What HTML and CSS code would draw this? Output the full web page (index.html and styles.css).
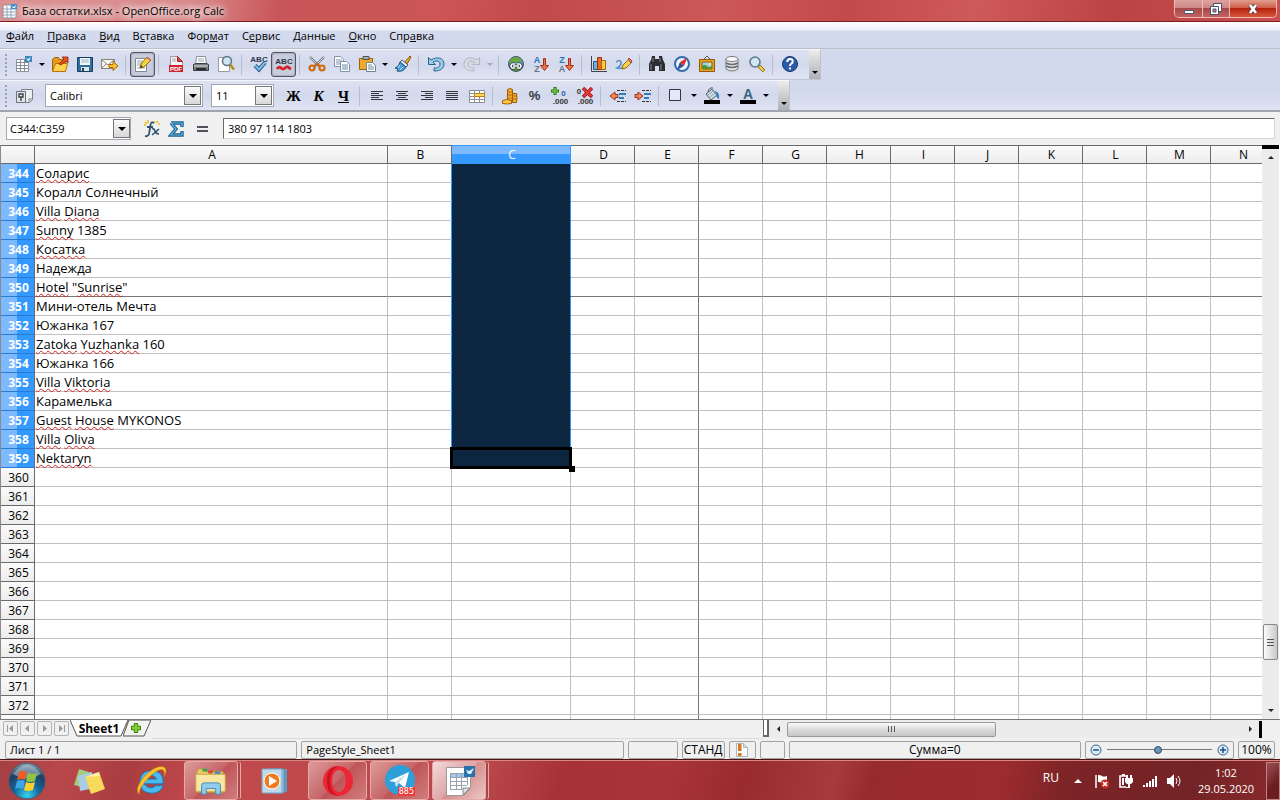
FILE: index.html
```html
<!DOCTYPE html>
<html lang="ru">
<head>
<meta charset="utf-8">
<title>База остатки.xlsx - OpenOffice.org Calc</title>
<link rel="stylesheet" href="styles.css">
</head>
<body>
<header class="titlebar">
  <svg class="app-icon" viewBox="0 0 16 16"><path d="M1 2h10l3 4v9H1z" fill="#fff" stroke="#8c8f96"/><path d="M1 6h12M1 9h12M1 12h12M5 3v12M9 3v12" stroke="#8fa6bd"/><path d="M9 1h6v5H9z" fill="#3f8fc8"/><path d="M10 3l2 1 2-2-1 3h-2z" fill="#fff"/></svg>
  <h1 class="title">База остатки.xlsx - OpenOffice.org Calc</h1>
  <div class="window-buttons">
    <button class="wb wb-min" aria-label="Свернуть"><svg viewBox="0 0 12 12"><path d="M1.500 7.500h9v3h-9z" fill="#fff" stroke="#555a70"/></svg></button>
    <button class="wb wb-max" aria-label="Развернуть"><svg viewBox="0 0 12 12"><path d="M3.500.500h8v8h-8z" fill="#fff" stroke="#4d526a"/><path d="M.500 3.500h8v8h-8z" fill="#fff" stroke="#4d526a"/><path d="M3 6h3v3H3z" fill="#b98a90" stroke="#4d526a"/></svg></button>
    <button class="wb wb-close" aria-label="Закрыть"><svg viewBox="0 0 12 12"><path d="M3 2l6 8M9 2l-6 8" stroke="#5c3a44" stroke-width="4.400"/><path d="M3 2l6 8M9 2l-6 8" stroke="#fff" stroke-width="2.600"/></svg></button>
  </div>
</header>

<nav class="menubar">
  <a href="#"><u>Ф</u>айл</a><a href="#"><u>П</u>равка</a><a href="#"><u>В</u>ид</a><a href="#">В<u>с</u>тавка</a><a href="#">Фор<u>м</u>ат</a><a href="#">С<u>е</u>рвис</a><a href="#"><u>Д</u>анные</a><a href="#"><u>О</u>кно</a><a href="#">Спр<u>а</u>вка</a>
</nav>

<div class="toolbars">
  <div class="toolbar toolbar-standard">
    <span class="grip"></span>
    <button class="tb" aria-label="Создать"><svg viewBox="0 0 18 18"><path d="M1.500 4.500h12v12h-12z" fill="#fff" stroke="#8d939d"/><path d="M1 7.500h12M1 10.500h12M1 13.500h12M5.500 4v12M9.500 4v12" stroke="#858c96"/><path d="M10 1h7v6h-7z" fill="#3a88bd"/><path d="M11 3l2 1 3-2-2 4h-1z" fill="#d9effb"/></svg></button>
    <button class="dd" aria-label="Список создания"></button>
    <button class="tb" aria-label="Открыть"><svg viewBox="0 0 18 18"><path d="M1.500 15.500v-11l2-2h4l1 2h6v11z" fill="#e79a1b" stroke="#a96008"/><path d="M1.500 16.500l3-8h12l-2 8z" fill="#ffd34d" stroke="#b8730b"/><path d="M8 9l5-5-2-2h6v6l-2-2-5 4z" fill="#e8501c" stroke="#8f2308" stroke-width=".8"/></svg></button>
    <button class="tb" aria-label="Сохранить"><svg viewBox="0 0 18 18"><path d="M1.500 2.500h15v14h-15z" fill="#2f6f9c" stroke="#17405f"/><path d="M4 3h10v7H4z" fill="#f4f7fa"/><path d="M5 5h8M5 7h8" stroke="#9db2c2"/><path d="M5 12h8v4H5z" fill="#dde5ea"/><path d="M6 13h2v3H6z" fill="#17405f"/></svg></button>
    <button class="tb" aria-label="Отправить"><svg viewBox="0 0 18 18"><path d="M.500 4.500h13v9h-13z" fill="#f8f6ee" stroke="#88847c"/><path d="M1 5l6 5 6-5M1 13l4-4M13 13L9 9" fill="none" stroke="#88847c"/><path d="M8 9.500h4v-3l5 4.500-5 4.500v-3H8z" fill="#ffc233" stroke="#a86a06"/></svg></button>
    <span class="sep"></span>
    <button class="tb pressed" aria-label="Режим правки"><svg viewBox="0 0 18 18"><path d="M1.500 3.500h11v13h-11z" fill="#fff" stroke="#7f8790"/><path d="M3 6h6M3 8h5M3 10h4M3 13h8" stroke="#9aa3ad"/><path d="M6 13l1-4 6-7 4 3-7 7z" fill="#f5d23e" stroke="#8a7413"/><path d="M13 2l4 3-1 1-4-3z" fill="#e9657e"/><path d="M6 13l1-3 2 2z" fill="#333"/></svg></button>
    <span class="sep"></span>
    <button class="tb" aria-label="Экспорт в PDF"><svg viewBox="0 0 18 18"><path d="M3.500 1.500h7l5 5v10h-12z" fill="#f6f6f8" stroke="#999"/><path d="M10.500 1.500l5 5h-5z" fill="#d84653" stroke="#a22"/><path d="M5 4h4M5 6h4" stroke="#aaa"/><path d="M2 10h14v7H2z" fill="#cf2330"/><text x="9" y="16" class="pdf-text">PDF</text></svg></button>
    <button class="tb" aria-label="Печать"><svg viewBox="0 0 18 18"><path d="M4.500 1.500h9l1 8h-11z" fill="#fff" stroke="#8a929b"/><path d="M6 4h6M6 6h6" stroke="#9aa"/><path d="M1.500 9.500l2-1h11l2 1v6h-15z" fill="#7a7c80" stroke="#3b3d41"/><path d="M2 11h14" stroke="#dadde0"/><path d="M4 14h10" stroke="#26282b" stroke-width="2"/></svg></button>
    <button class="tb" aria-label="Просмотр страницы"><svg viewBox="0 0 18 18"><path d="M1.500 2.500h11v14h-11z" fill="#fff" stroke="#979ca5"/><circle cx="10" cy="6" r="4.500" fill="#c9e4f4" fill-opacity=".9" stroke="#5e7387" stroke-width="1.500"/><path d="M13 9.500l4 5" stroke="#b68918" stroke-width="2.500"/></svg></button>
    <span class="sep"></span>
    <button class="tb" aria-label="Проверка орфографии"><svg viewBox="0 0 18 18"><text x="9" y="6.500" class="abc-text">ABC</text><path d="M5 10.500l4 4 6-7" fill="none" stroke="#22537e" stroke-width="4"/><path d="M5 10.500l4 4 6-7" fill="none" stroke="#7cc0ee" stroke-width="2.200"/></svg></button>
    <button class="tb pressed" aria-label="Автопроверка"><svg viewBox="0 0 18 18"><text x="9" y="9" class="abc-text">ABC</text><path d="M2 14q2-3 4-1t4 0 3-1 3 2" fill="none" stroke="#d4202a" stroke-width="2.800"/></svg></button>
    <span class="sep"></span>
    <button class="tb" aria-label="Вырезать"><svg viewBox="0 0 18 18"><path d="M2 2l10 10M16 2L6 12" stroke="#70757b" stroke-width="2.400"/><path d="M2 2l9 9M16 2l-9 9" stroke="#d6dadd"/><circle cx="4" cy="13" r="2.500" fill="none" stroke="#d06a10" stroke-width="2.200"/><circle cx="14" cy="13" r="2.500" fill="none" stroke="#d06a10" stroke-width="2.200"/><path d="M6 11l3-2 3 2" fill="none" stroke="#d06a10" stroke-width="2"/></svg></button>
    <button class="tb" aria-label="Копировать"><svg viewBox="0 0 18 18"><path d="M1.500 1.500h6l3 3v7h-9z" fill="#fff" stroke="#7f95a8"/><path d="M3 5h6M3 7h6M3 9h5" stroke="#7d97ad"/><path d="M7.500 6.500h6l3 3v7h-9z" fill="#fff" stroke="#7f95a8"/><path d="M9 10h6M9 12h6M9 14h6" stroke="#6f8ca6"/></svg></button>
    <button class="tb" aria-label="Вставить"><svg viewBox="0 0 18 18"><path d="M1.500 3.500h13v11h-13z" fill="#f0a92a" stroke="#9b620c"/><path d="M5 1.500h6v3H5z" fill="#a9adb3" stroke="#555"/><path d="M8.500 7.500h6l3 3v6h-9z" fill="#fff" stroke="#6f8291"/><path d="M10 10h4M10 12h6M10 14h6" stroke="#6f8ca6"/></svg></button>
    <button class="dd" aria-label="Варианты вставки"></button>
    <button class="tb" aria-label="Копировать формат"><svg viewBox="0 0 18 18"><path d="M11 7l5-6 1 1-4 7z" fill="#f1b32c" stroke="#8b5a08"/><path d="M8 5l6 5-2 2-6-5z" fill="#e8eef4" stroke="#557"/><path d="M6 7l6 5c-2 4-6 5-9 4l1-2-3-1c3-1 4-3 5-6z" fill="#4d9bd6" stroke="#1d5583"/><path d="M6 10l-2 3M9 12l-3 3" stroke="#c3e3fa"/></svg></button>
    <span class="sep"></span>
    <button class="tb" aria-label="Отменить"><svg viewBox="0 0 18 18"><path d="M1.500 2.500v7h7L6 7c4-2 7-1 7 2s-2 4-6 4v3c7 0 10-3 10-7 0-6-7-8-13-4z" fill="#9bcbea" stroke="#2b628c"/></svg></button>
    <button class="dd" aria-label="Список отмены"></button>
    <button class="tb" aria-label="Вернуть"><svg viewBox="0 0 18 18"><path d="M16.500 2.500v7h-7L12 7C8 5 5 6 5 9s2 4 6 4v3c-7 0-10-3-10-7 0-6 7-8 13-4z" fill="#d8dce4" stroke="#b2b7c0"/></svg></button>
    <button class="dd dd-off" aria-label="Список возврата"></button>
    <span class="sep"></span>
    <button class="tb" aria-label="Гиперссылка"><svg viewBox="0 0 18 18"><circle cx="9" cy="9" r="7.500" fill="#5e96c8" stroke="#42566c"/><path d="M3 5q6-6 12 0l-2 3-4-2-3 3-4-1z" fill="#69aa38"/><path d="M4 14q5 4 10 0l-3-2H7z" fill="#4f8f2b"/><path d="M8 9H5q-2 2 0 4h3M10 9h3q2 2 0 4h-3M6 11h6" fill="none" stroke="#333" stroke-width="3"/><path d="M8 9H5q-2 2 0 4h3M10 9h3q2 2 0 4h-3M6 11h6" fill="none" stroke="#fff" stroke-width="1.500"/></svg></button>
    <button class="tb" aria-label="По возрастанию"><svg viewBox="0 0 18 18"><text x="5" y="8" class="sort-text sort-blue">A</text><text x="5" y="17" class="sort-text sort-gray">Z</text><path d="M11.500 3.500h2v7h3L12.500 15.500 8.500 10.500h3z" fill="#ef7440" stroke="#a52c14"/></svg></button>
    <button class="tb" aria-label="По убыванию"><svg viewBox="0 0 18 18"><text x="5" y="8" class="sort-text sort-blue">Z</text><text x="5" y="17" class="sort-text sort-gray">A</text><path d="M11.500 3.500h2v7h3L12.500 15.500 8.500 10.500h3z" fill="#ef7440" stroke="#a52c14"/></svg></button>
    <span class="sep"></span>
    <button class="tb" aria-label="Диаграмма"><svg viewBox="0 0 18 18"><path d="M1.500 1v15.500H17" fill="none" stroke="#444"/><path d="M3.500 6.500h4v8h-4z" fill="#6eb0df" stroke="#28577c"/><path d="M7.500 2.500h4v12h-4z" fill="#ee6a24" stroke="#963006"/><path d="M11.500 5.500h4v9h-4z" fill="#ffcb3b" stroke="#a36b05"/></svg></button>
    <button class="tb" aria-label="Рисунок"><svg viewBox="0 0 18 18"><path d="M1 7q4-3 5 0t-4 6q5 1 8-1" fill="none" stroke="#4d92ce" stroke-width="1.600"/><path d="M7 14l1-4 6-6 3 3-6 6z" fill="#f8cf50" stroke="#9b6b12"/><path d="M13 4l1-1 3 3-1 2z" fill="#e67d82" stroke="#a34747"/></svg></button>
    <span class="sep"></span>
    <button class="tb" aria-label="Найти"><svg viewBox="0 0 18 18"><path d="M4 1h3v3h4V1h3l1 4 2 4v7h-6v-5H7v5H1V9l2-4z" fill="#2c2e31"/><path d="M3 9v6M13 9v6M5 3v4M12 3v4" stroke="#85898e"/></svg></button>
    <button class="tb" aria-label="Навигатор"><svg viewBox="0 0 18 18"><circle cx="9" cy="9" r="7" fill="#edf5fc" stroke="#356caa" stroke-width="2"/><path d="M14 3l-3 8-4-4z" fill="#e22b24"/><path d="M4 15l3-8 4 4z" fill="#304f96"/></svg></button>
    <button class="tb" aria-label="Галерея"><svg viewBox="0 0 18 18"><path d="M6 4l3-3 3 3" fill="none" stroke="#555"/><path d="M1.500 4.500h15v12h-15z" fill="#f0a51e" stroke="#915806"/><path d="M4 7h10v7H4z" fill="#9bd4ef" stroke="#8a5a10"/><path d="M4 14v-3q3-2 5 0t5 0v3z" fill="#51952e"/><path d="M11 8h2v2h-2z" fill="#ffe86a"/></svg></button>
    <button class="tb" aria-label="Источники данных"><svg viewBox="0 0 18 18"><path d="M3 4v10q6 4 12 0V4z" fill="#e2e4e6" stroke="#77797c"/><ellipse cx="9" cy="4" rx="6" ry="2.500" fill="#fafafa" stroke="#77797c"/><path d="M3 8q6 3 12 0M3 11q6 3 12 0" fill="none" stroke="#696c70" stroke-width="1.500"/></svg></button>
    <button class="tb" aria-label="Масштаб"><svg viewBox="0 0 18 18"><circle cx="7" cy="7" r="5" fill="#cfe6f5" stroke="#64798d" stroke-width="1.600"/><path d="M11 11l5 5" stroke="#8c6a0c" stroke-width="3.400"/><path d="M11.500 11.500l4 4" stroke="#ffd84c" stroke-width="1.800"/></svg></button>
    <span class="sep"></span>
    <button class="tb" aria-label="Справка"><svg viewBox="0 0 18 18"><circle cx="9" cy="9" r="7.500" fill="#2c5ca8" stroke="#17366d"/><path d="M6.300 7q0-3 2.700-3t2.700 2.400q0 1.600-1.600 2.400-1.100.5-1.100 2.200" fill="none" stroke="#fff" stroke-width="2"/><path d="M8 12.500h2v2H8z" fill="#fff"/></svg></button>
    <button class="tb-end" aria-label="Ещё"></button>
  </div>

  <div class="toolbar toolbar-format">
    <span class="grip"></span>
    <button class="tb" aria-label="Стили"><svg viewBox="0 0 18 18"><path d="M6.500 2.500h11v10l-3 3h-8z" fill="#eef1f4" stroke="#7b8188"/><path d="M17 12h-3v3" fill="none" stroke="#7b8188"/><path d="M1.500 4.500h9v11h-9z" fill="#e3e6ea" stroke="#6c7279"/><path d="M4 7h4v3H4zM6 10v4" fill="none" stroke="#3c4147" stroke-width="1.400"/></svg></button>
    <span class="combo combo-font"><select aria-label="Гарнитура"><option>Calibri</option></select><span class="combo-arrow"></span></span>
    <span class="combo combo-size"><select aria-label="Кегль"><option>11</option></select><span class="combo-arrow"></span></span>
    <button class="tb letter letter-bold first-letter" aria-label="Жирный">Ж</button>
    <button class="tb letter letter-italic" aria-label="Курсив">К</button>
    <button class="tb letter letter-under" aria-label="Подчёркнутый">Ч</button>
    <span class="sep"></span>
    <button class="tb" aria-label="По левому краю"><svg viewBox="0 0 18 18"><path d="M3 4.500h12M3 6.500h8M3 8.500h12M3 10.500h8M3 12.500h12" stroke="#33363b"/></svg></button>
    <button class="tb" aria-label="По центру"><svg viewBox="0 0 18 18"><path d="M3 4.500h12M5 6.500h8M3 8.500h12M5 10.500h8M3 12.500h12" stroke="#33363b"/></svg></button>
    <button class="tb" aria-label="По правому краю"><svg viewBox="0 0 18 18"><path d="M3 4.500h12M7 6.500h8M3 8.500h12M7 10.500h8M3 12.500h12" stroke="#33363b"/></svg></button>
    <button class="tb" aria-label="По ширине"><svg viewBox="0 0 18 18"><path d="M3 4.500h12M3 6.500h12M3 8.500h12M3 10.500h12M3 12.500h12" stroke="#33363b"/></svg></button>
    <button class="tb" aria-label="Объединить"><svg viewBox="0 0 18 18"><path d="M1.500 3.500h15v12h-15z" fill="#fff" stroke="#8b8f96"/><path d="M1 6.500h16M1 9.500h16M1 12.500h16M6.500 3v13M11.500 3v13" stroke="#8b8f96"/><path d="M6.500 6.500h10v3h-10z" fill="#ffd95e" stroke="#c07d13"/></svg></button>
    <span class="sep"></span>
    <button class="tb" aria-label="Денежный"><svg viewBox="0 0 18 18"><path d="M6.500 2.500q3-2 5 0v11h-5z" fill="#f6ab2c" stroke="#9c5d0b"/><path d="M11.500 6.500h4q1 5 0 9h-4z" fill="#f6ab2c" stroke="#9c5d0b"/><path d="M1.500 13.500q4-2 9 0v3q-5 1-9 0z" fill="#ffc64d" stroke="#9c5d0b"/><path d="M7 5h4M7 8h4M7 11h4M12 9h4M12 12h4" stroke="#b26c0f"/></svg></button>
    <button class="tb percent" aria-label="Процент">%</button>
    <button class="tb" aria-label="Добавить разряд"><svg viewBox="0 0 18 18"><path d="M4 0v8M0 4h8" stroke="#2f7d12" stroke-width="3"/><path d="M4 1v6M1 4h6" stroke="#8fdb55"/><text x="12.500" y="8.500" class="dec-text dec-blue">0</text><text x="9.500" y="17" class="dec-text">.000</text></svg></button>
    <button class="tb" aria-label="Удалить разряд"><svg viewBox="0 0 18 18"><text x="3" y="7" class="dec-text">0</text><text x="9.500" y="17" class="dec-text">.000</text><path d="M7 1l9 9M16 1l-9 9" stroke="#9a1113" stroke-width="3.400"/><path d="M7.500 1.500l8 8M15.500 1.500l-8 8" stroke="#e9383a" stroke-width="1.800"/></svg></button>
    <span class="sep"></span>
    <button class="tb" aria-label="Уменьшить отступ"><svg viewBox="0 0 18 18"><path d="M1 9l5-4v2.500h3v3H6V13z" fill="#f08c5c" stroke="#9c2f16"/><path d="M8 3.500h9M8 14.500h9" stroke="#333" stroke-dasharray="3 1"/><path d="M10 7h7M10 11h5" stroke="#2d7dbd" stroke-width="2"/></svg></button>
    <button class="tb" aria-label="Увеличить отступ"><svg viewBox="0 0 18 18"><path d="M9 9L4 5v2.500H1v3h3V13z" fill="#f08c5c" stroke="#9c2f16"/><path d="M8 3.500h9M8 14.500h9" stroke="#333" stroke-dasharray="3 1"/><path d="M10 7h7M10 11h5" stroke="#2d7dbd" stroke-width="2"/></svg></button>
    <span class="sep"></span>
    <button class="tb" aria-label="Обрамление"><svg viewBox="0 0 18 18"><path d="M2.500 2.500h11v11h-11z" fill="#e3e9f8" stroke="#33363b"/></svg></button>
    <button class="dd" aria-label="Виды обрамления"></button>
    <button class="tb" aria-label="Цвет фона"><svg viewBox="0 0 18 18"><path d="M1 13h16v4H1z"/><path d="M3 7l6-5 5 6-6 5z" fill="#cfdbe4" stroke="#4d5c68"/><path d="M5 8l5-4M7 10l5-4" stroke="#8ea0ae"/><path d="M5 5q1-5 5-4" fill="none" stroke="#4d5c68"/><path d="M12 4q5 1 4 8-3-1-3-5z" fill="#3d80b2"/></svg></button>
    <button class="dd" aria-label="Выбор цвета фона"></button>
    <button class="tb" aria-label="Цвет шрифта"><svg viewBox="0 0 18 18"><path d="M1 13h16v4H1z"/><text x="9" y="12" class="font-color-text">A</text></svg></button>
    <button class="dd" aria-label="Выбор цвета шрифта"></button>
    <button class="tb-end" aria-label="Ещё"></button>
  </div>
</div>

<div class="formula-bar">
  <div class="name-box"><input aria-label="Поле имени" value="C344:C359"><button class="combo-arrow" aria-label="Список имён"></button></div>
  <button class="fb" aria-label="Мастер функций"><svg viewBox="0 0 18 18"><path d="M2 2l2 2M5 0v3M1 5h2M13 3l2-2M15 4h2M11 1v2" stroke="#e5bb20" stroke-width="1.500"/><path d="M11 3Q8 1 7.500 5L6 14q-1 3-4 2M4 7h6" fill="none" stroke="#2c5270" stroke-width="1.800"/><path d="M9 9q2-1 3 2t4 3M16 9l-7 6" fill="none" stroke="#2c5270" stroke-width="1.600"/></svg></button>
  <button class="fb" aria-label="Сумма"><svg viewBox="0 0 18 18"><path d="M3 3h11v4M14 11v4H3l5-6-5-6" fill="none" stroke="#17608f" stroke-width="3.400"/><path d="M3 3h11v3.500M14 11.500V15H3l5-6-5-6" fill="none" stroke="#67b3e0" stroke-width="1.200"/></svg></button>
  <button class="fb" aria-label="Формула"><svg viewBox="0 0 18 18"><path d="M4 7h11M4 11h11" stroke="#4c535c" stroke-width="2"/></svg></button>
  <input class="formula-input" aria-label="Строка ввода" value="380 97 114 1803">
</div>

<main class="sheet-area">
  <div class="grid-view">
    <table class="sheet">
      <colgroup><col class="c-head"><col class="c-a"><col class="c-std"><col class="c-c"><col class="c-std"><col class="c-std"><col class="c-std"><col class="c-std"><col class="c-std"><col class="c-std"><col class="c-std"><col class="c-std"><col class="c-std"><col class="c-std"><col class="c-std"></colgroup>
      <thead><tr><th></th><th>A</th><th>B</th><th class="selected">C</th><th>D</th><th>E</th><th>F</th><th>G</th><th>H</th><th>I</th><th>J</th><th>K</th><th>L</th><th>M</th><th>N</th></tr></thead>
      <tbody id="rows"></tbody>
    </table>
  </div>
  <div class="vscroll">
    <span class="split-h"></span>
    <button class="sb-arrow up" aria-label="Вверх"></button>
    <span class="vtrack"></span>
    <span class="vthumb"><i></i><i></i><i></i></span>
    <span class="vtrack-end"></span>
    <button class="sb-arrow down" aria-label="Вниз"></button>
  </div>
</main>

<div class="tabs-row">
  <div class="sheet-nav">
    <button aria-label="Первый лист"><svg viewBox="0 0 13 13"><path d="M3.500 3v7" stroke="#999"/><path d="M9 3v7L5 6.500z" fill="#999"/></svg></button>
    <button aria-label="Предыдущий лист"><svg viewBox="0 0 13 13"><path d="M8 3v7L4 6.500z" fill="#999"/></svg></button>
    <button aria-label="Следующий лист"><svg viewBox="0 0 13 13"><path d="M5 3v7l4-3.500z" fill="#999"/></svg></button>
    <button aria-label="Последний лист"><svg viewBox="0 0 13 13"><path d="M9.500 3v7" stroke="#999"/><path d="M4 3v7l4-3.500z" fill="#999"/></svg></button>
  </div>
  <button class="tab"><svg class="tab-shape" viewBox="0 0 58 17" preserveAspectRatio="none"><path d="M0 0l7 16h44L58 0" fill="#fff" stroke="#555"/></svg><span>Sheet1</span></button>
  <button class="tab-add" aria-label="Добавить лист"><svg viewBox="0 0 28 17"><path d="M0 16L6 0h22l-7 16z" fill="#f3f3f3" stroke="#555"/><path d="M13 3v10M8 8h10" stroke="#3f8d12" stroke-width="4.400"/><path d="M13 4v8M9 8h8" stroke="#82cf35" stroke-width="2.400"/></svg></button>
  <span class="tabs-fill"></span>
  <span class="split-v"></span>
  <div class="hscroll">
    <button class="sb-arrow left" aria-label="Влево"></button>
    <span class="hthumb"><i></i><i></i><i></i></span>
    <span class="htrack"></span>
    <button class="sb-arrow right" aria-label="Вправо"></button>
    <span class="split-black"></span>
  </div>
</div>

<div class="statusbar">
  <span class="st st-sheet">Лист 1 / 1</span>
  <span class="st st-style">PageStyle_Sheet1</span>
  <span class="st st-lang"></span>
  <span class="st st-mode">СТАНД</span>
  <span class="st st-doc"><svg viewBox="0 0 14 14"><path d="M1.500.500h7l4 4v9h-11z" fill="#fff" stroke="#a9b7bb"/><path d="M8.500.500v4h4" fill="#cde" stroke="#a9b7bb"/><path d="M3 1h3.500v7H3zM3 10h3.500v3H3z" fill="#d9771e"/></svg></span>
  <span class="st st-sign"></span>
  <span class="st st-sum">Сумма=0</span>
  <span class="st st-zoom">
    <button class="zoom-btn" aria-label="Уменьшить"><svg viewBox="0 0 12 12"><circle cx="6" cy="6" r="5" fill="#d7edfb" stroke="#3d6489"/><path d="M3 6h6" stroke="#1f4f7c" stroke-width="1.500"/></svg></button>
    <input class="zoom-slider" type="range" min="0" max="100" value="48" aria-label="Масштаб">
    <button class="zoom-btn" aria-label="Увеличить"><svg viewBox="0 0 12 12"><circle cx="6" cy="6" r="5" fill="#d7edfb" stroke="#3d6489"/><path d="M3 6h6M6 3v6" stroke="#1f4f7c" stroke-width="1.500"/></svg></button>
  </span>
  <span class="st st-percent">100%</span>
</div>

<footer class="taskbar">
  <button class="start" aria-label="Пуск"><svg viewBox="0 0 38 38"><defs><radialGradient id="orb" cx=".5" cy=".9" r=".9"><stop offset="0" stop-color="#36d3f0"/><stop offset=".4" stop-color="#14669d"/><stop offset=".75" stop-color="#1d3e5e"/><stop offset="1" stop-color="#8fa9bb"/></radialGradient></defs><circle cx="19" cy="19" r="18" fill="url(#orb)" stroke="#45576a"/><path d="M5 12Q19-6 33 12q-14 8-28 0z" fill="#dfeaf2" opacity=".45"/><path d="M11 10q4-2 8 0l-2 8q-4-2-8 0z" fill="#ee5c27"/><path d="M20 11q4 2 9 0l-2 8q-5 2-9 0z" fill="#90c63c"/><path d="M9 19q4-2 8 0l-2 8q-4-2-8 0z" fill="#3ea5e8"/><path d="M18 20q4 2 9 0l-2 8q-5 2-9 0z" fill="#fccf2d"/></svg></button>
  <button class="pin pin-notes" aria-label="Записки"><svg viewBox="0 0 34 30"><path d="M7 3l13 4-5 15L2 19z" fill="#a4cc7c"/><path d="M6 10l14-4 3 16-15 3z" fill="#aacbe4"/><path d="M13 11l14-5 6 17-14 5z" fill="#f8da5b"/><path d="M13 11l14-5 1 4z" fill="#fff0a4"/></svg></button>
  <button class="pin pin-ie" aria-label="Internet Explorer"><svg viewBox="0 0 34 34"><path d="M10 20h20q1-14-13-14Q6 6 5 18q1 12 13 12 9 0 12-8h-8q-4 4-9 1-2-1-3-3zm1-5q2-4 6-4t6 4z" fill="#49b9ee" stroke="#1878b5"/><path d="M5 31Q-2 28 9 13 22-1 31 2q4 3 0 11 1-7-2-8-5-1-15 9Q3 26 5 31z" fill="#fbc32f" stroke="#b87912" stroke-width=".7"/></svg></button>
  <button class="task task-stack" aria-label="Проводник"><svg viewBox="0 0 36 32"><path d="M3 6l2-3h6l2 3h18v22H3z" fill="#e8c767" stroke="#b89439"/><path d="M9 3h5v3H9z" fill="#3ba34a"/><path d="M15 5h5v3h-5z" fill="#db4a32"/><path d="M22 6h6v3h-6z" fill="#3d8ac4"/><path d="M2 9h31v18H2z" fill="#f9e6a2" stroke="#cfac50"/><path d="M8 30v-9q0-3 3-3h14q3 0 3 3v9h-5v-6H13v6z" fill="#8fcdef" stroke="#3d89b8"/></svg></button>
  <button class="pin pin-media" aria-label="Проигрыватель"><svg viewBox="0 0 34 32"><path d="M14 4h15v23H14z" fill="#5d9bc5"/><path d="M10 4h16v24H10z" fill="#9fc9e5" stroke="#5990b5"/><path d="M4 4h20v24H4z" fill="#bfd9ea" stroke="#7ba4c0"/><circle cx="14" cy="16" r="8" fill="#f07a1d" stroke="#fff"/><path d="M11 11v10l8-5z" fill="#fff"/></svg></button>
  <button class="task task-opera" aria-label="Opera"><svg viewBox="0 0 34 34"><path d="M17 2a15 15 0 1 0 0 30 15 15 0 1 0 0-30zm1 4c9 0 9 22 0 22s-9-22 0-22z" fill="#ee2535" fill-rule="evenodd"/><path d="M17 2Q6 3 6 17t11 15q-5-2-7-8-2-7 0-14 2-6 7-8z" fill="#c91224"/></svg></button>
  <button class="task task-telegram" aria-label="Telegram"><svg viewBox="0 0 34 34"><circle cx="17" cy="16" r="15" fill="#2da0d9"/><path d="M6 17l20-9-4 16-6-5-3 4-1-5z" fill="#fff"/><path d="M12 18l11-8-7 9-3 4z" fill="#c4dcea"/></svg><span class="badge">885</span></button>
  <button class="task task-stack task-active" aria-label="OpenOffice Calc"><svg viewBox="0 0 34 34"><path d="M4.500 3.500h24v21l-7 7h-17z" fill="#fff" stroke="#999"/><path d="M8 9h16v4H8z" fill="#9fc7ec"/><path d="M8 9.500h17M8 13.500h17M8 17.500h17M8 21.500h17M8 25.500h12M8.500 9v17M14.500 9v17M19.500 9v17M25.500 9v12" stroke="#9aa2ae"/><path d="M28 24h-7v7z" fill="#ddd" stroke="#888"/><path d="M22 2h11v11H22z" fill="#2873ac"/><path d="M24 6l3 1 5-3-3 6h-3z" fill="#dff1fd"/></svg></button>
  <span class="task-space"></span>
  <span class="lang">RU</span>
  <div class="tray">
    <svg viewBox="0 0 16 16"><path d="M4 10h8L8 6z" fill="#fff"/></svg>
    <svg viewBox="0 0 16 16"><path d="M2 2v13" stroke="#fff" stroke-width="1.500"/><path d="M4 2q3 0 4 1t5 0v7q-4 1-5 0T4 9z" fill="#fff"/><circle cx="11" cy="11" r="4.500" fill="#c72a24"/><path d="M9 9l4 4M13 9l-4 4" stroke="#fff" stroke-width="1.700"/></svg>
    <svg viewBox="0 0 16 16"><path d="M8 14H2V3h6" fill="none" stroke="#fff" stroke-width="1.600"/><path d="M4 1h3v2H4zM4 5h2v7H4z" fill="#fff"/><path d="M7 5h8v4l-2 2H9L7 9zM8 2h2v3H8zM12 2h2v3h-2zM10 11h2v4H8v-1h2z" fill="#fff"/></svg>
    <svg viewBox="0 0 16 16"><path d="M1 12h2v2H1zM4 10h2v4H4zM7 8h2v6H7zM10 6h2v8h-2zM13 3h2v11h-2z" fill="#fff"/></svg>
    <svg viewBox="0 0 16 16"><path d="M1 5h3l4-4v14l-4-4H1z" fill="#fff"/><path d="M10 5q2 3 0 6M12 3q4 5 0 10" fill="none" stroke="#fff"/></svg>
  </div>
  <div class="clock"><time>1:02</time><span>29.05.2020</span></div>
  <button class="show-desktop" aria-label="Показать рабочий стол"></button>
</footer>
<script src="sheet.js"></script>
</body>
</html>
```

FILE: styles.css
```css
* { box-sizing: border-box; }

html, body { height: 100%; margin: 0; }

body {
  display: flex;
  flex-direction: column;
  min-height: 0;
  overflow: hidden;
  background: #f0f0f0;
  color: #000;
  font: 12px/16px "Open Sans", "Noto Sans", sans-serif;
}

button, input, select {
  margin: 0;
  padding: 0;
  border: 0;
  border-radius: 0;
  background: none;
  color: inherit;
  font: inherit;
}

svg { display: block; flex: none; }

/* Title bar */
.titlebar {
  flex: none;
  display: flex;
  align-items: center;
  height: 22px;
  padding: 0 3px 0 2px;
  border-bottom: 1px solid #7c1c20;
  background: linear-gradient(100deg, #dc9294 0, #d98a8c 15%, #c85557 22%, #cb5557 34%, #c04a4c 42%, #cd5858 56%, #c24a4a 66%, #cf5a5a 76%, #bb4343 87%, #c95050 100%);
}
.app-icon { width: 16px; height: 16px; }
.title {
  flex: 1;
  margin: 0 0 0 4px;
  font-size: 11px;
  font-weight: 400;
  white-space: nowrap;
  text-shadow: 0 0 6px #fff, 0 0 8px #fff, 0 0 10px #fff;
}
.window-buttons {
  align-self: flex-start;
  display: flex;
  height: 18px;
  border: 1px solid #f0b9b6;
  border-top: 0;
  border-radius: 0 0 5px 5px;
  overflow: hidden;
}
.wb {
  display: flex;
  align-items: center;
  justify-content: center;
  height: 17px;
  border-right: 1px solid #f0b9b6;
  background: linear-gradient(#dba3a0, #cf8886 45%, #a8494a 50%, #bf6462);
}
.wb svg { width: 12px; height: 12px; }
.wb-min { width: 28px; }
.wb-max { width: 27px; }
.wb-close { width: 46px; border-right: 0; background: linear-gradient(#e0a08f, #cf5e48 45%, #b32310 50%, #d8583a); }

/* Menu */
.menubar {
  flex: none;
  display: flex;
  align-items: center;
  gap: 13px;
  height: 27px;
  padding: 2px 6px 0;
  border-bottom: 1px solid #b9c2c8;
  background: linear-gradient(#fff 0, #eef1f9 8px, #d4daed 9px);
  font-size: 11px;
}
.menubar a { color: #000; text-decoration: none; }

/* Toolbars */
.toolbars {
  flex: none;
  display: flex;
  flex-direction: column;
  align-items: flex-start;
  border-bottom: 2px solid #a0a4ac;
  background: linear-gradient(#d3d9ec 70%, #dde2f4);
}
.toolbar {
  display: flex;
  align-items: center;
  border-top: 1px solid #f4f6fc;
  border-right: 1px solid #bcc2cf;
  background: linear-gradient(#dde2f2, #d3d9ec 50%, #dfe4f4);
}
.toolbar-standard { height: 31px; border-bottom: 1px solid #c0c5d2; }
.toolbar-format { height: 30px; }
.toolbar-standard .tb { margin-bottom: 1px; }
.grip {
  width: 3px;
  height: 22px;
  margin: 0 4px;
  background: repeating-linear-gradient(#9aa3b8 0 2px, transparent 2px 4px) 1px 0 / 2px 100% no-repeat;
}
.tb {
  flex: none;
  display: flex;
  align-items: center;
  justify-content: center;
  width: 25px;
  height: 25px;
}
.tb svg { width: 18px; height: 18px; }
.pressed { border: 1px solid #50555f; border-radius: 3px; background: #c8cddc; box-shadow: inset 0 0 2px #6d7380; }
.dd { flex: none; width: 11px; height: 25px; }
.dd::before, .combo-arrow::before {
  content: "";
  display: block;
  width: 0;
  margin: 0 auto;
  border: 3px solid transparent;
  border-top-color: #000;
  border-bottom: 0;
}
.dd-off::before { border-top-color: #a3a8b3; }
.sep { flex: none; width: 8px; height: 20px; background: linear-gradient(#b8becf, #b8becf) 3px 0 / 1px 100% no-repeat; }
.tb-end {
  align-self: stretch;
  display: flex;
  align-items: flex-end;
  justify-content: center;
  width: 11px;
  margin-left: 7px;
  padding-bottom: 5px;
  background: linear-gradient(#ececec, #adb0b5);
}
.tb-end::before {
  content: "";
  border: 3px solid transparent;
  border-top-color: #000;
  border-bottom: 0;
}
.pdf-text { font: bold 6px "Liberation Sans", sans-serif; fill: #fff; text-anchor: middle; }
.abc-text { font: bold 8px "Liberation Sans", sans-serif; fill: #2c3a4c; text-anchor: middle; }
.sort-text { font: bold 9px "Liberation Sans", sans-serif; text-anchor: middle; }
.sort-blue { fill: #2477b5; }
.sort-gray { fill: #6d757e; }
.dec-text { font: bold 8px "Liberation Sans", sans-serif; fill: #333; text-anchor: middle; }
.dec-blue { fill: #2c5ab0; }
.font-color-text { font: bold 14px "Liberation Sans", sans-serif; fill: #37627f; text-anchor: middle; }

.combo {
  display: flex;
  align-items: center;
  height: 23px;
  padding: 0 1px;
  border: 1px solid #a3a7ae;
  background: #fff;
}
.combo select { flex: 1; min-width: 0; padding-left: 3px; appearance: none; outline: 0; font-size: 11px; }
.combo-font { width: 158px; margin-left: 9px; }
.combo-size { width: 63px; margin-left: 8px; }
.combo-arrow {
  flex: none;
  display: flex;
  align-items: center;
  width: 17px;
  height: 19px;
  border: 1px solid #73777d;
  background: linear-gradient(#fafafa, #d8d8d8);
}
.combo-arrow::before { border-width: 4px; border-bottom: 0; }
.letter { font: bold 15px/20px "Liberation Serif", serif; }
.letter-italic { font-style: italic; }
.letter-under { text-decoration: underline; }
.first-letter { margin-left: 7px; }
.percent { font: bold 13px/18px "Liberation Sans", sans-serif; color: #333b45; }

/* Formula bar */
.formula-bar {
  flex: none;
  display: flex;
  align-items: center;
  height: 33px;
  padding: 0 5px 0 6px;
  background: #f0f0f0;
  font-size: 11px;
}
.name-box {
  display: flex;
  align-items: center;
  width: 125px;
  height: 23px;
  margin-right: 8px;
  border: 1px solid #a3a7ae;
  background: #fff;
}
.name-box input { flex: 1; min-width: 0; padding-left: 3px; }
.fb { display: flex; align-items: center; justify-content: center; width: 25px; height: 25px; }
.fb svg { width: 18px; height: 18px; }
.formula-input {
  flex: 1;
  min-width: 0;
  height: 21px;
  margin-left: 9px;
  padding: 0 4px;
  border: 1px solid #d8d8d8;
  border-top-color: #6a6a6a;
  border-left-color: #6a6a6a;
  background: #fff;
}

/* Sheet */
.sheet-area { flex: 1; min-height: 0; display: flex; border-left: 1px solid #8a8a8a; border-bottom: 1px solid #777; }
.grid-view { flex: 1; min-width: 0; overflow: hidden; background: #fff; }
.sheet { table-layout: fixed; width: 1274px; border-collapse: separate; border-spacing: 0; }
.c-head { width: 34px; }
.c-a { width: 353px; }
.c-std { width: 64px; }
.c-c { width: 119px; }
.sheet th {
  height: 19px;
  padding: 1px 0 0 2px;
  border-right: 1px solid #6a6a6a;
  border-bottom: 1px solid #6a6a6a;
  background: linear-gradient(#fbfbfb, #ececec);
  font-weight: 400;
  line-height: 16px;
}
.sheet thead th { padding-top: 0; border-top: 1px solid #6a6a6a; }
.sheet thead .selected { border-color: #3399ff; background: linear-gradient(#7db9ff 50%, #3399ff 50%); color: #fff; }
.sheet tbody th.selected { border-bottom-color: #2a7ad0; background: linear-gradient(90deg, #7db9ff 50%, #3399ff 50%); color: #fff; font-weight: 700; }
.sheet td {
  position: relative;
  height: 19px;
  padding: 0 1px;
  border-right: 1px solid #c0c0c0;
  border-bottom: 1px solid #c0c0c0;
  font-size: 13px;
  line-height: 17px;
  white-space: nowrap;
}
.sheet .page-right { border-right-color: #777; }
.sheet .page-bottom td { border-bottom-color: #777; }
.sheet .before-fill { border-right-color: #3399ff; }
.sheet .fill, .sheet .page-bottom .fill { border-right-color: #3399ff; border-bottom-color: #0c263f; background: #0c263f; }
.cursor { position: absolute; z-index: 1; inset: -2px; border: 3px solid #000; }
.cursor::after { content: ""; position: absolute; right: -6px; bottom: -6px; width: 6px; height: 6px; background: #000; }
.misspelled { text-decoration: underline wavy #d02020 1px; text-underline-offset: 1px; text-decoration-skip-ink: none; }

/* Scrollbars */
.vscroll { flex: none; display: flex; flex-direction: column; align-items: center; width: 18px; border-right: 1px solid #fff; background: #ececec; }
.split-h { width: 17px; height: 4px; background: #000; }
.sb-arrow { flex: none; display: flex; align-items: center; justify-content: center; width: 18px; height: 17px; }
.sb-arrow::before { content: ""; border: 3px solid transparent; }
.up::before { border-bottom-color: #222; border-top: 0; }
.down::before { border-top-color: #222; border-bottom: 0; }
.left::before { border-right-color: #222; border-left: 0; }
.right::before { border-left-color: #222; border-right: 0; }
.vtrack { flex: 459; }
.vtrack-end { flex: 42; }
.vthumb {
  flex: none;
  display: flex;
  flex-direction: column;
  align-items: center;
  justify-content: center;
  gap: 2px;
  width: 15px;
  height: 36px;
  border: 1px solid #888;
  border-radius: 2px;
  background: linear-gradient(90deg, #fafafa, #c9c9cb);
}
.vthumb i { width: 7px; height: 1px; background: #555; }

/* Sheet tabs */
.tabs-row { flex: none; display: flex; height: 19px; padding: 0 18px 0 3px; background: #f0f0f0; }
.sheet-nav { display: flex; gap: 2px; padding-top: 1px; margin-right: 1px; }
.sheet-nav button { width: 15px; height: 15px; border: 1px solid #b4b4b4; border-radius: 2px; }
.sheet-nav svg { width: 13px; height: 13px; }
.tab { position: relative; width: 58px; height: 17px; font-weight: 700; line-height: 16px; }
.tab-shape { position: absolute; inset: 0; width: 100%; height: 100%; }
.tab span { position: relative; }
.tab-add { height: 17px; margin-left: -5px; }
.tab-add svg { width: 28px; height: 17px; }
.tabs-fill { flex: 612; border-bottom: 1px solid #dcdcdc; }
.split-v { width: 6px; height: 17px; border: solid #666; border-width: 0 2px 2px 1px; background: #fff; }
.hscroll { flex: 493; display: flex; align-items: center; height: 18px; background: #ececec; }
.hthumb {
  flex: 208;
  display: flex;
  align-items: center;
  justify-content: center;
  gap: 2px;
  height: 15px;
  border: 1px solid #999;
  border-radius: 2px;
  background: linear-gradient(#fafafa, #dcdcdc 50%, #c6c6c8);
}
.hthumb i { width: 1px; height: 6px; background: #555; }
.htrack { flex: 247; }
.split-black { width: 3px; height: 17px; background: #000; }

/* Status bar */
.statusbar { flex: none; display: flex; align-items: center; gap: 4px; height: 21px; padding: 1px 5px 0; background: #f0f0f0; border-bottom: 1px solid #4c1517; }
.st { display: flex; align-items: center; min-width: 0; height: 18px; padding: 1px 4px 0; border: 1px solid #a2a2a2; border-radius: 2px; white-space: nowrap; }
.st-sheet { flex: 292; font-size: 11px; }
.st-style { flex: 323; font-size: 11px; }
.st-lang { width: 50px; }
.st-mode { width: 43px; padding: 1px 0 0; justify-content: center; }
.st-doc { width: 27px; padding: 0; justify-content: center; }
.st-doc svg { width: 14px; height: 14px; }
.st-sign { width: 25px; }
.st-sum { flex: 292; justify-content: center; }
.st-zoom { width: 149px; gap: 5px; }
.zoom-btn { flex: none; }
.zoom-btn svg { width: 12px; height: 12px; }
.zoom-slider { flex: 1; min-width: 0; height: 14px; appearance: none; background: linear-gradient(#777, #777) 0 6px / 100% 1px no-repeat; }
.zoom-slider::-webkit-slider-thumb { appearance: none; width: 8px; height: 8px; border: 1px solid #2f4d69; border-radius: 4px; background: #6b93b8; }
.st-percent { width: 37px; padding: 1px 0 0; justify-content: center; }

/* Taskbar */
.taskbar {
  flex: none;
  display: flex;
  align-items: center;
  height: 40px;
  border-top: 1px solid #d98784;
  background: linear-gradient(105deg, #a33f42 0, #b9484b 5%, #a93c40 10%, #c24a4c 16%, #b9474a 38%, #a63235 44%, #a93538 52%, #992a2e 58%, #a83a3c 65%, #982a2d 68%, #9d2b2e 78%, #7c2427 83%, #732326 93%, #8a2a2d 100%);
}
.start { margin-left: 8px; }
.start svg { width: 38px; height: 38px; }
.pin { display: flex; align-items: center; justify-content: center; height: 38px; }
.pin svg { width: 34px; height: 32px; }
.pin-notes { width: 62px; margin-left: 12px; }
.pin-ie { width: 62px; }
.pin-media { width: 66px; }
.task {
  position: relative;
  display: flex;
  align-items: center;
  justify-content: center;
  width: 59px;
  height: 39px;
  margin-right: 3px;
  border: 1px solid #e6a9a8;
  border-radius: 3px;
  background: linear-gradient(135deg, #dd9b9a, #c66567 50%, #bf5457 52%, #d07d7d);
}
.task svg { width: 34px; height: 34px; }
.task-stack { width: 54px; margin-right: 4px; box-shadow: 3px 0 0 -1px #a8474a, 4px 0 0 -1px #e6a9a8; }
.pin-ie + .task-stack { margin-left: 2px; }
.task-active { background: linear-gradient(135deg, #f3dada, #dfa5a5 50%, #d58e8e 52%, #ecc8c8); }
.badge { position: absolute; right: 13px; bottom: 3px; padding: 0 1px; background: #ee3b3b; color: #fff; font: 8px/9px "DejaVu Sans", sans-serif; }
.task-space { flex: 1; }
.lang { color: #fff; margin-right: 11px; padding-bottom: 5px; }
.tray { display: flex; gap: 8px; margin-right: 4px; }
.tray svg { width: 16px; height: 16px; }
.clock { display: flex; flex-direction: column; align-items: center; width: 80px; color: #fff; font-size: 11px; }
.show-desktop { width: 14px; height: 38px; border: 1px solid #c08383; background: linear-gradient(135deg, #9b5255, #6c1d20 60%); }
```

FILE: sheet.js
```js
// Words wrapped in [] are flagged by the spelling checker.
const names = [
  '[Соларис]', 'Коралл Солнечный', '[Villa] [Diana]', '[Sunny] 1385', '[Косатка]', 'Надежда',
  '[Hotel] "[Sunrise]"', 'Мини-отель Мечта', 'Южанка 167', '[Zatoka] [Yuzhanka] 160', 'Южанка 166',
  '[Villa] [Viktoria]', 'Карамелька', '[Guest] [House] MYKONOS', '[Villa] [Oliva]', '[Nektaryn]'
];
const first = 344;
const last = 372;
const columns = 'ABCDEFGHIJKLMN';
const body = document.getElementById('rows');

// The row after the last numbered one only fills the strip above the tabs.
for (let n = first; n <= last + 1; n++) {
  const name = names[n - first];
  const tr = body.insertRow();
  if (n === 350) tr.className = 'page-bottom';
  const th = document.createElement('th');
  if (n <= last) th.textContent = n;
  if (name) th.className = 'selected';
  tr.append(th);
  for (const col of columns) {
    const td = tr.insertCell();
    if (col === 'A' && name) td.innerHTML = name.replace(/\[(.+?)\]/g, '<span class="misspelled">$1</span>');
    if (col === 'B' && name) td.className = 'before-fill';
    if (col === 'C' && name) td.className = 'fill';
    if (col === 'E') td.className = 'page-right';
    if (col === 'C' && n === 359) td.innerHTML = '<span class="cursor"></span>';
  }
}
```
